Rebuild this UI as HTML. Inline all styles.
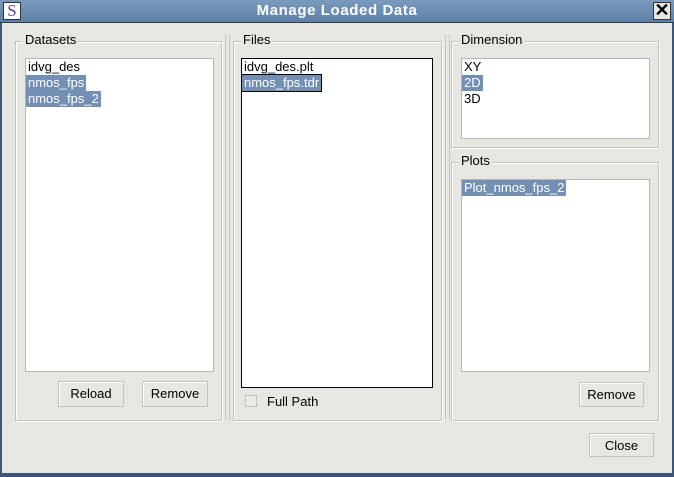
<!DOCTYPE html>
<html><head><style>
body{margin:0;width:674px;height:477px;overflow:hidden;background:#4a6688;font-family:"Liberation Sans",sans-serif;font-size:13px;color:#000;position:relative}
.win{position:absolute;left:0;top:0;width:674px;height:477px;background:#e8e6e1;box-shadow:inset 2px 0 0 #3e5573,inset -2px 0 0 #3e5573,inset 0 -4px 0 #3e5573}
.title{position:absolute;left:0;top:0;width:674px;height:22px;background:linear-gradient(#7a9bbf,#5f80a6);border-bottom:1px solid #2f3f55}
.title span{position:absolute;left:0;width:674px;text-align:center;top:2px;color:#fff;font-weight:bold;font-size:15px;letter-spacing:.6px}
.ico{position:absolute;left:3px;top:2px;width:18px;height:18px;background:#fff;border:1px solid #333;box-sizing:border-box;color:#6040a0;font-family:"Liberation Serif",serif;font-size:17px;line-height:16px;text-align:center}
.x{position:absolute;right:3px;top:2px;width:18px;height:18px;background:#e8e6e1;border:1px solid #333;box-sizing:border-box;font-size:18px;line-height:15px;text-align:center;font-weight:bold}
.g{position:absolute;border:1px solid #c4c2bc;box-shadow:inset 1px 1px 0 #fff,1px 1px 0 #fff}
.gl{position:absolute;top:-10px;left:7px;background:#e8e6e1;padding:0 2px;font-size:13px}
.list{position:absolute;background:#fff;border:1px solid #b8b6b0;box-sizing:border-box;padding:0 0}
.list div{height:16px;line-height:16px;padding:0 2px;display:table}
.sel{background:#7390b4;color:#fff}
.btn{position:absolute;border:1px solid #c4c2bc;box-shadow:inset 1px 1px 0 #fff;background:#e8e6e1;text-align:center;line-height:23px;box-sizing:border-box;font-size:13px}
.sp{position:absolute;width:3px;border-left:1px solid #c8c6c0;border-right:1px solid #c8c6c0}
</style></head><body>
<div class="win"></div>
<div class="title"><div class="ico">S</div><span>Manage Loaded Data</span><div class="x">✕</div></div>

<div class="g" style="left:15px;top:41px;width:205px;height:378px"><span class="gl">Datasets</span></div>
<div class="list" style="left:25px;top:58px;width:189px;height:314px"><div>idvg_des</div><div class="sel">nmos_fps</div><div class="sel">nmos_fps_2</div></div>
<div class="btn" style="left:58px;top:381px;width:66px;height:26px">Reload</div>
<div class="btn" style="left:142px;top:381px;width:66px;height:26px">Remove</div>

<div class="sp" style="left:225px;top:35px;height:385px"></div>
<div class="sp" style="left:445px;top:35px;height:385px"></div>

<div class="g" style="left:233px;top:41px;width:207px;height:378px"><span class="gl">Files</span></div>
<div class="list" style="left:241px;top:58px;width:192px;height:330px;border:1px solid #000"><div>idvg_des.plt</div><div class="sel" style="outline:1px solid #000">nmos_fps.tdr</div></div>
<div style="position:absolute;left:245px;top:395px;width:12px;height:12px;border:1px solid #c4c2bc;box-sizing:border-box;background:#ecebe7"></div>
<div style="position:absolute;left:267px;top:394px">Full Path</div>

<div class="g" style="left:451px;top:41px;width:206px;height:105px"><span class="gl">Dimension</span></div>
<div class="list" style="left:461px;top:58px;width:189px;height:81px"><div>XY</div><div class="sel">2D</div><div>3D</div></div>

<div class="g" style="left:451px;top:162px;width:206px;height:257px"><span class="gl">Plots</span></div>
<div class="list" style="left:461px;top:179px;width:189px;height:193px"><div class="sel">Plot_nmos_fps_2</div></div>
<div class="btn" style="left:579px;top:382px;width:65px;height:25px">Remove</div>

<div class="btn" style="left:589px;top:433px;width:65px;height:24px">Close</div>
</body></html>
